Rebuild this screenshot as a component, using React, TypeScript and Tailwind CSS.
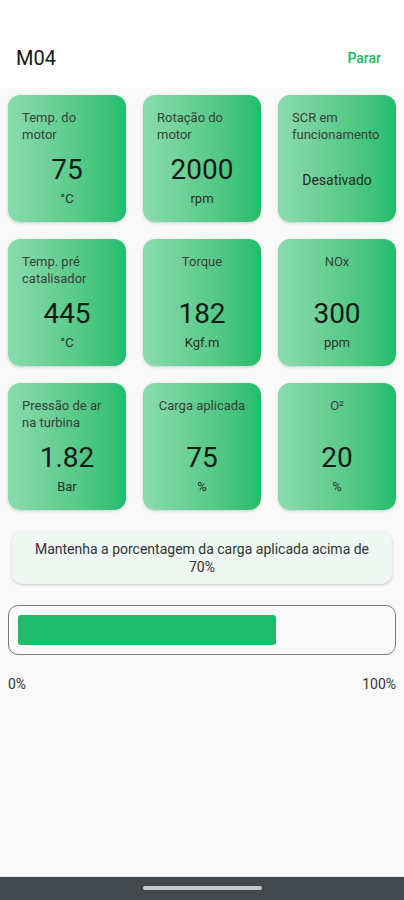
import React from "react";

interface Metric {
  title: string;
  value: string;
  unit: string;
  text?: boolean;
}

const metrics: Metric[] = [
  { title: "Temp. do motor", value: "75", unit: "°C" },
  { title: "Rotação do motor", value: "2000", unit: "rpm" },
  { title: "SCR em funcionamento", value: "Desativado", unit: "", text: true },
  { title: "Temp. pré catalisador", value: "445", unit: "°C" },
  { title: "Torque", value: "182", unit: "Kgf.m" },
  { title: "NOx", value: "300", unit: "ppm" },
  { title: "Pressão de ar na turbina", value: "1.82", unit: "Bar" },
  { title: "Carga aplicada", value: "75", unit: "%" },
  { title: "O²", value: "20", unit: "%" },
];

function MetricCard({ m }: { m: Metric }) {
  return (
    <div className="flex h-[127px] flex-col items-center rounded-[12px] bg-gradient-to-r from-[#8adbae] to-[#1ebd6d] px-[14px] pb-[5px] pt-[14px] shadow-[0_1px_3px_rgba(0,0,0,0.18)]">
      <div className="h-[34px] w-fit text-left text-[13px] leading-[17px] text-[#34423a]">
        {m.title}
      </div>
      <div className="flex flex-1 flex-col items-center justify-center gap-[5px]">
        {m.text ? (
          <span className="text-[14px] leading-[18px] text-[#1f2a23]">{m.value}</span>
        ) : (
          <>
            <span className="text-[28px] leading-[31px] text-[#141a16]">{m.value}</span>
            <span className="text-[13px] leading-[17px] text-[#26302a]">{m.unit}</span>
          </>
        )}
      </div>
    </div>
  );
}

export default function App() {
  const load = 70;

  return (
    <div
      className="flex h-[900px] w-[404px] flex-col bg-[#f9f9f9]"
      style={{ fontFamily: "Roboto, 'Noto Sans', sans-serif" }}
    >
      <header className="flex h-[88px] items-start justify-between bg-white pl-4 pr-[23px] pt-[44px]">
        <span className="text-[20px] leading-[28px] text-[#161616]">M04</span>
        <span className="text-[14px] font-medium leading-[28px] text-[#1db96b]">Parar</span>
      </header>

      <main className="flex flex-1 flex-col px-2 pt-[7px]">
        <div className="grid grid-cols-3 gap-x-[17px] gap-y-[17px]">
          {metrics.map((m) => (
            <MetricCard key={m.title} m={m} />
          ))}
        </div>

        <div className="mx-1 mt-[22px] rounded-[10px] bg-[#eef7f2] px-4 py-[8px] text-center text-[14px] leading-[18px] text-[#333] shadow-[0_1px_3px_rgba(0,0,0,0.2)]">
          Mantenha a porcentagem da carga aplicada acima de 70%
        </div>

        <div className="mt-[21px] rounded-[10px] border border-[#7a7a7a] p-[9px]">
          <div className="h-[30px]">
            <div
              className="h-full rounded-[3px] bg-[#1dbb6c]"
              style={{ width: `${load}%` }}
            />
          </div>
        </div>

        <div className="mt-[19px] flex justify-between text-[14px] leading-[20px] text-[#333]">
          <span>0%</span>
          <span>100%</span>
        </div>
      </main>

      <div className="flex h-[24px] items-start justify-center border-t border-[#e6e6e6] bg-[#42484c] pt-[9px]">
        <div className="h-[4px] w-[119px] rounded-full bg-[#c9cbcc]" />
      </div>
    </div>
  );
}
